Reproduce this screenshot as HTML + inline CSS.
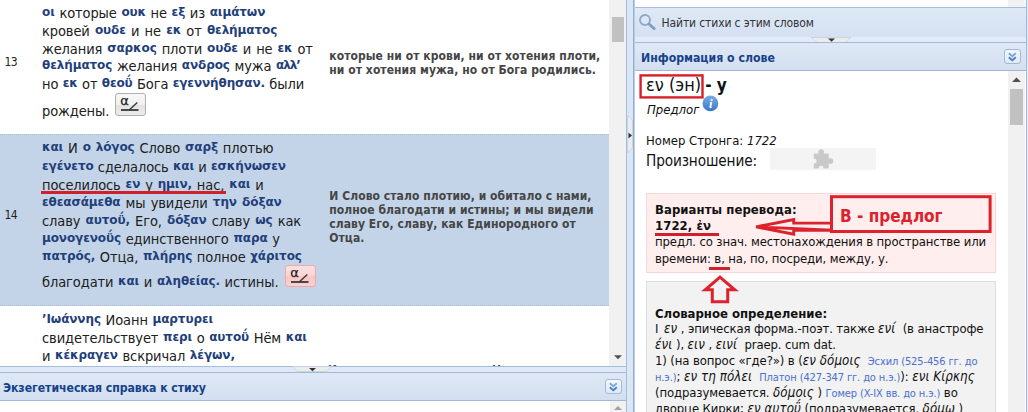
<!DOCTYPE html>
<html><head><meta charset="utf-8">
<style>
html,body{margin:0;padding:0;}
body{width:1028px;height:412px;overflow:hidden;position:relative;background:#fff;font-family:"DejaVu Sans Condensed","DejaVu Sans","Liberation Sans",sans-serif;color:#111;}
.abs{position:absolute;}
.ln{position:absolute;white-space:nowrap;font-size:14.5px;line-height:18px;height:18px;color:#202020;letter-spacing:-0.1px;word-spacing:0.6px;}
.ln b{font-family:"DejaVu Sans",sans-serif;font-size:12px;color:#1f3f7a;font-weight:bold;position:relative;top:-2px;letter-spacing:-0.1px;}
.tr{position:absolute;white-space:nowrap;font-size:12px;font-weight:bold;color:#454545;line-height:15px;letter-spacing:0.06px;}
.num{position:absolute;font-size:12px;color:#222;letter-spacing:-0.7px;}
.hdr{position:absolute;background:linear-gradient(#dfe8f5,#d3dff0);border-top:1px solid #a2b8d8;border-bottom:1px solid #a2b8d8;box-sizing:border-box;}
.hdr span{position:absolute;left:7px;font-weight:bold;font-size:12.2px;color:#15428b;white-space:nowrap;}
.tool{position:absolute;width:17px;height:15.4px;border:1px solid #9db9de;border-radius:3px;background:linear-gradient(#f4f8fd,#dfe9f6);box-sizing:border-box;}
.abtn{position:absolute;width:30.5px;height:22.6px;box-sizing:border-box;border:1px solid #b0b0b0;border-radius:3px;background:linear-gradient(#f8f8f8 0%,#f0f0f0 50%,#e2e2e2 51%,#ebebeb 100%);}
.abtn.pink{border-color:#f0a8a8;background:linear-gradient(#fde0e0 0%,#fbd4d4 50%,#f8c6c6 51%,#fad0d0 100%);}
.rt{position:absolute;white-space:nowrap;font-size:13px;line-height:16px;color:#111;letter-spacing:-0.12px;}
.rt i.g{font-size:13.2px;letter-spacing:0.1px;}
.rt small{font-size:11px;color:#4a6fd0;}
</style></head><body>
<!-- ============ left panel ============ -->
<div class="abs" style="left:0;top:134px;width:609px;height:172px;background:#c3d4e8;border-top:1px dotted #a9bdd6;border-bottom:1px dotted #a9bdd6;box-sizing:border-box;"></div>

<div class="num" style="left:4.5px;top:54.5px;">13</div>
<div class="ln" style="left:42px;top:3.6px;"><b>οι</b> которые <b>ουκ</b> не <b>εξ</b> из <b>αιμάτων</b></div>
<div class="ln" style="left:42px;top:21.6px;word-spacing:1.15px">кровей <b>ουδε</b> и не <b>εκ</b> от <b>θελήματος</b></div>
<div class="ln" style="left:42px;top:39.6px;word-spacing:0.90px">желания <b>σαρκος</b> плоти <b>ουδε</b> и не <b>εκ</b> от</div>
<div class="ln" style="left:42px;top:57.4px;"><b>θελήματος</b> желания <b>ανδρος</b> мужа <b style="letter-spacing:-1.1px">αλλ’</b></div>
<div class="ln" style="left:42px;top:75.2px;word-spacing:0.30px">но <b>εκ</b> от <b>θεοΰ</b> Бога <b>εγεννήθησαν.</b> были</div>
<div class="ln" style="left:42px;top:102px;">рождены.</div>
<div class="abtn" style="left:115px;top:93.2px;"><svg width="28" height="20" viewBox="0 0 28 20" style="position:absolute;left:0;top:0"><text x="4.3" y="11" font-size="13" font-family="DejaVu Sans,sans-serif" fill="#1a1a1a" stroke="#1a1a1a" stroke-width="0.25">α</text><path d="M5 16H22.5" stroke="#4a4a4a" stroke-width="2" fill="none"/><path d="M13.5 15.8L21.3 8.6" stroke="#333" stroke-width="1.3" fill="none"/></svg></div>

<div class="num" style="left:4.5px;top:207.6px;">14</div>
<div class="ln" style="left:42px;top:139.2px;word-spacing:0.87px"><b>και</b> И <b>ο λόγος</b> Слово <b>σαρξ</b> плотью</div>
<div class="ln" style="left:42px;top:157.5px;word-spacing:0.20px"><b>εγένετο</b> сделалось <b>και</b> и <b>εσκήνωσεν</b></div>
<div class="ln" style="left:42px;top:175.5px;word-spacing:0.85px">поселилось <b>εν</b> у <b>ημιν,</b> нас, <b>και</b> и</div>
<div class="abs" style="left:41px;top:191px;width:185px;height:2.5px;background:#d0202c;"></div>
<div class="ln" style="left:42px;top:193.8px;word-spacing:1.10px"><b>εθεασάμεθα</b> мы увидели <b>την δόξαν</b></div>
<div class="ln" style="left:42px;top:212px;word-spacing:1.10px">славу <b>αυτοΰ,</b> Его, <b>δόξαν</b> славу <b>ως</b> как</div>
<div class="ln" style="left:42px;top:230.3px;"><b>μονογενοΰς</b> единственного <b>παρα</b> у</div>
<div class="ln" style="left:42px;top:248.4px;"><b>πατρός,</b> Отца, <b>πλήρης</b> полное <b>χάριτος</b></div>
<div class="ln" style="left:42px;top:273px;">благодати <b>και</b> и <b>αληθείας.</b> истины.</div>
<div class="abtn pink" style="left:285px;top:264.8px;"><svg width="28" height="20" viewBox="0 0 28 20" style="position:absolute;left:0;top:0"><text x="4.3" y="11" font-size="13" font-family="DejaVu Sans,sans-serif" fill="#1a1a1a" stroke="#1a1a1a" stroke-width="0.25">α</text><path d="M5 16H22.5" stroke="#4a4a4a" stroke-width="2" fill="none"/><path d="M13.5 15.8L21.3 8.6" stroke="#333" stroke-width="1.3" fill="none"/></svg></div>

<div class="ln" style="left:42px;top:311px;"><b>’Ιωάννης</b> Иоанн <b>μαρτυρει</b></div>
<div class="ln" style="left:42px;top:329px;">свидетельствует <b>περι</b> о <b>αυτοΰ</b> Нём <b>και</b></div>
<div class="ln" style="left:42px;top:347px;">и <b>κέκραγεν</b> вскричал <b>λέγων,</b></div>

<div class="tr" style="left:329.3px;top:48.6px;">которые ни от крови, ни от хотения плоти,</div>
<div class="tr" style="left:329.3px;top:62.5px;">ни от хотения мужа, но от Бога родились.</div>
<div class="tr" style="left:329.3px;top:189px;">И Слово стало плотию, и обитало с нами,</div>
<div class="tr" style="left:329.3px;top:203px;">полное благодати и истины; и мы видели</div>
<div class="tr" style="left:329.3px;top:217px;">славу Его, славу, как Единородного от</div>
<div class="tr" style="left:329.3px;top:231px;">Отца.</div>
<div class="abs" style="left:328px;top:363px;width:282px;height:3px;overflow:hidden;"><div class="tr" style="left:0;top:0;">Иоанн свидетельствует о Нем и, восклицая,</div></div>

<!-- left scrollbar -->
<div class="abs" style="left:609px;top:0;width:17px;height:366px;background:#f1f1f1;"></div>
<div class="abs" style="left:611.5px;top:17px;width:12.5px;height:24.5px;background:#c1c1c1;"></div>
<svg class="abs" style="left:613px;top:354px" width="10" height="6"><path d="M1 1.2H9L5 5.2Z" fill="#505050"/></svg>

<!-- bottom splitter + panel -->
<div class="abs" style="left:0;top:366px;width:627px;height:7px;background:#dfe8f6;border-top:1px solid #a3bde0;box-sizing:border-box;"></div>
<svg class="abs" style="left:292px;top:366px" width="40" height="6"><path d="M0 0.5H40C38 0.5 37 5.5 33 5.5H7C3 5.5 2 0.5 0 0.5Z" fill="#ececec" stroke="#c3cfdf" stroke-width="0.8"/><path d="M17 2H24L20.5 5.3Z" fill="#333"/></svg>
<div class="hdr" style="left:0;top:372px;width:627px;height:29px;"><span style="top:7.5px;left:3px;letter-spacing:-0.06px">Экзегетическая справка к стиху</span></div>
<div class="tool" style="left:605px;top:379px;"><svg width="15" height="14" viewBox="0 0 15 14" style="position:absolute;left:0;top:0"><path d="M3.8 3.2L7.3 6.2L10.8 3.2" stroke="#7aa6dc" stroke-width="1.8" fill="none"/><path d="M3.8 7.2L7.3 10.2L10.8 7.2" stroke="#4a7fc2" stroke-width="1.8" fill="none"/></svg></div>
<div class="abs" style="left:610px;top:401px;width:16px;height:11px;background:#f1f1f1;"></div>
<svg class="abs" style="left:613px;top:405px" width="10" height="6"><path d="M1 5H9L5 1Z" fill="#a0a0a0"/></svg>

<!-- vertical splitter -->
<div class="abs" style="left:626px;top:0;width:8px;height:412px;background:#dce7f6;border-left:1px solid #a6bcdc;border-right:1px solid #93aed4;box-sizing:border-box;"></div><div class="abs" style="left:634px;top:0;width:1px;height:412px;background:#bccde6;"></div>
<svg class="abs" style="left:627px;top:115px" width="6" height="38"><path d="M0.5 0C0.5 2 5.5 3 5.5 6V32C5.5 35 0.5 36 0.5 38Z" fill="#ececec" stroke="#c3cfdf" stroke-width="0.8"/><path d="M1.5 17.5V23.5L5 20.5Z" fill="#333"/></svg>

<!-- ============ right panel ============ -->
<div class="abs" style="left:1008px;top:0;width:17px;height:7px;background:#f1f1f1;"></div>
<div class="abs" style="left:635px;top:7px;width:391px;height:36px;background:linear-gradient(#dfe9f6,#d2dff1);border-top:1px solid #a3bde0;box-sizing:border-box;"></div>
<svg class="abs" style="left:638.2px;top:13.3px" width="19" height="19" viewBox="0 0 19 19"><circle cx="7" cy="7" r="5" fill="#dce8f8" stroke="#8faaca" stroke-width="1.9"/><path d="M11 11L16.2 15.6" stroke="#7f9ec6" stroke-width="2.8" stroke-linecap="round"/></svg>
<div class="abs" style="left:661.5px;top:16px;font-size:12px;color:#333;white-space:nowrap;letter-spacing:-0.12px;">Найти стихи с этим словом</div>
<div class="abs" style="left:635px;top:36.5px;width:391px;height:5.5px;background:#e2ebf7;"></div><svg class="abs" style="left:811px;top:37px" width="40" height="6"><path d="M0 0.5H40C38 0.5 37 5.5 33 5.5H7C3 5.5 2 0.5 0 0.5Z" fill="#ececec" stroke="#c3cfdf" stroke-width="0.8"/><path d="M17 1.5H24L20.5 4.8Z" fill="#333"/></svg>
<div class="hdr" style="left:635px;top:42px;width:391px;height:29px;"><span style="top:8px;left:6px;">Информация о слове</span></div>
<div class="tool" style="left:1004px;top:49px;"><svg width="15" height="14" viewBox="0 0 15 14" style="position:absolute;left:0;top:0"><path d="M3.8 3.2L7.3 6.2L10.8 3.2" stroke="#7aa6dc" stroke-width="1.8" fill="none"/><path d="M3.8 7.2L7.3 10.2L10.8 7.2" stroke="#4a7fc2" stroke-width="1.8" fill="none"/></svg></div>
<div class="abs" style="left:1026px;top:0;width:2px;height:412px;background:linear-gradient(90deg,#9bb8e2 0,#9bb8e2 1px,#e4ecf8 1px);"></div>

<!-- right scrollbar -->
<div class="abs" style="left:1008px;top:71px;width:17px;height:341px;background:#f1f1f1;"></div>
<div class="abs" style="left:1010px;top:89px;width:13px;height:36px;background:#c1c1c1;"></div>
<svg class="abs" style="left:1011px;top:76px" width="11" height="7"><path d="M1 6H10L5.5 1.5Z" fill="#505050"/></svg>

<!-- word title -->
<svg class="abs" style="left:636px;top:70px" width="80" height="34"><rect x="4.6" y="5.4" width="61.9" height="22" fill="none" stroke="#d6212b" stroke-width="2.4"/></svg>
<div class="abs" style="left:646px;top:74px;font-size:18px;white-space:nowrap;color:#111;">εν (эн) <b style="margin-left:-1px;font-size:17px">- у</b></div>
<div class="abs" style="left:647px;top:102px;font-size:13px;font-style:italic;color:#111;">Предлог</div>
<svg class="abs" style="left:701.5px;top:95px" width="17" height="17" viewBox="0 0 17 17"><defs><linearGradient id="ig" x1="0" y1="0" x2="0" y2="1"><stop offset="0" stop-color="#78aee6"/><stop offset="1" stop-color="#3b76c6"/></linearGradient></defs><circle cx="8.4" cy="8.4" r="7.9" fill="url(#ig)"/><text x="8.8" y="12.9" text-anchor="middle" font-family="Liberation Serif,serif" font-style="italic" font-weight="bold" font-size="12.5" fill="#fff">i</text></svg>
<div class="rt" style="left:646px;top:133px;letter-spacing:-0.02px">Номер Стронга: <i>1722</i></div>
<div class="rt" style="left:646px;top:152.4px;font-size:15.2px;line-height:19px;">Произношение:</div>
<div class="abs" style="left:770px;top:148px;width:106px;height:21.5px;background:#f4f4f4;"></div>
<svg class="abs" style="left:810.2px;top:146.6px" width="25" height="25" viewBox="0 0 20 20"><rect x="3" y="5.2" width="12" height="12" rx="0.8" fill="#c9c9c9"/><circle cx="8.9" cy="4" r="2.3" fill="#c9c9c9"/><circle cx="16.3" cy="11.2" r="2.3" fill="#c9c9c9"/><circle cx="3.4" cy="11.2" r="1.9" fill="#f4f4f4"/><circle cx="8.9" cy="16.9" r="1.9" fill="#f4f4f4"/></svg>

<!-- pink box -->
<div class="abs" style="left:646px;top:193px;width:350px;height:79.6px;background:#ffeeed;border:1px solid #f8d6d6;box-sizing:border-box;"></div>
<div class="rt" style="left:655px;top:202px;font-weight:bold;letter-spacing:0.06px">Варианты перевода:</div>
<div class="rt" style="left:655px;top:218px;font-weight:bold;letter-spacing:0.06px">1722, ἐν</div>
<div class="abs" style="left:655px;top:233px;width:64px;height:2.5px;background:#d0202c;"></div>
<svg class="abs" style="left:753px;top:217.4px" width="80" height="20" viewBox="0 0 80 20"><path d="M3 9.9L40.7 2.6V6.1H79M79 13.2H40.7V17.2L3 9.9Z" fill="none" stroke="#dc222c" stroke-width="2.9" stroke-linejoin="miter"/></svg>
<svg class="abs" style="left:826px;top:190px" width="170" height="48"><rect x="5.5" y="6.7" width="158.6" height="34.8" fill="#ffeeed" stroke="#dc222c" stroke-width="3"/></svg>
<div class="abs" style="left:840px;top:206.3px;font-size:17px;font-weight:bold;color:#dc222c;white-space:nowrap;">В - предлог</div>
<div class="rt" style="left:655px;top:234px;">предл. со знач. местонахождения в пространстве или</div>
<div class="rt" style="left:655px;top:250.5px;">времени: в, на, по, посреди, между, у.</div>
<div class="abs" style="left:709px;top:267.3px;width:21px;height:2.6px;background:#d0202c;"></div>
<svg class="abs" style="left:700px;top:274px" width="40" height="30" viewBox="0 0 40 30"><path d="M20 3.2L5.2 15.8H12.3V27.8H27.7V15.8H34.8Z" fill="none" stroke="#dc222c" stroke-width="3"/></svg>

<!-- grey box -->
<div class="abs" style="left:646px;top:281px;width:350px;height:140px;background:#f2f2f2;border:1px solid #dedede;box-sizing:border-box;z-index:-1"></div>
<div class="rt" style="left:655px;top:305.6px;font-weight:bold;letter-spacing:0.0px">Словарное определение:</div>
<div class="rt" style="left:655px;top:321.2px;"><span style="margin-right:2px">I</span> <i class="g">εν</i> , эпическая форма.-поэт. также <i class="g">ενί</i>&nbsp; (в анастрофе</div>
<div class="rt" style="left:655px;top:337.2px;"><i class="g">ένι</i> ), <i class="g">ειν</i> , <i class="g">εινί</i>&nbsp; praep. cum dat.</div>
<div class="rt" style="left:655px;top:353.2px;">1) (на вопрос «где?») в (<i class="g">εν δόμοις</i>&nbsp; <small>Эсхил (525-456 гг. до</small></div>
<div class="rt" style="left:655px;top:369.2px;"><small>н.э.)</small>; <i class="g">εν τη πόλει</i>&nbsp; <small>Платон (427-347 гг. до н.э.)</small>): <i class="g">ενι Κίρκης</i></div>
<div class="rt" style="left:655px;top:385.2px;">(подразумевается. <i class="g">δόμοις</i> ) <small>Гомер (X-IX вв. до н.э.)</small> во</div>
<div class="rt" style="left:655px;top:401.2px;">дворце Кирки; <i class="g">εν αυτοΰ</i> (подразумевается. <i class="g">δόμω</i> )</div>
</body></html>
